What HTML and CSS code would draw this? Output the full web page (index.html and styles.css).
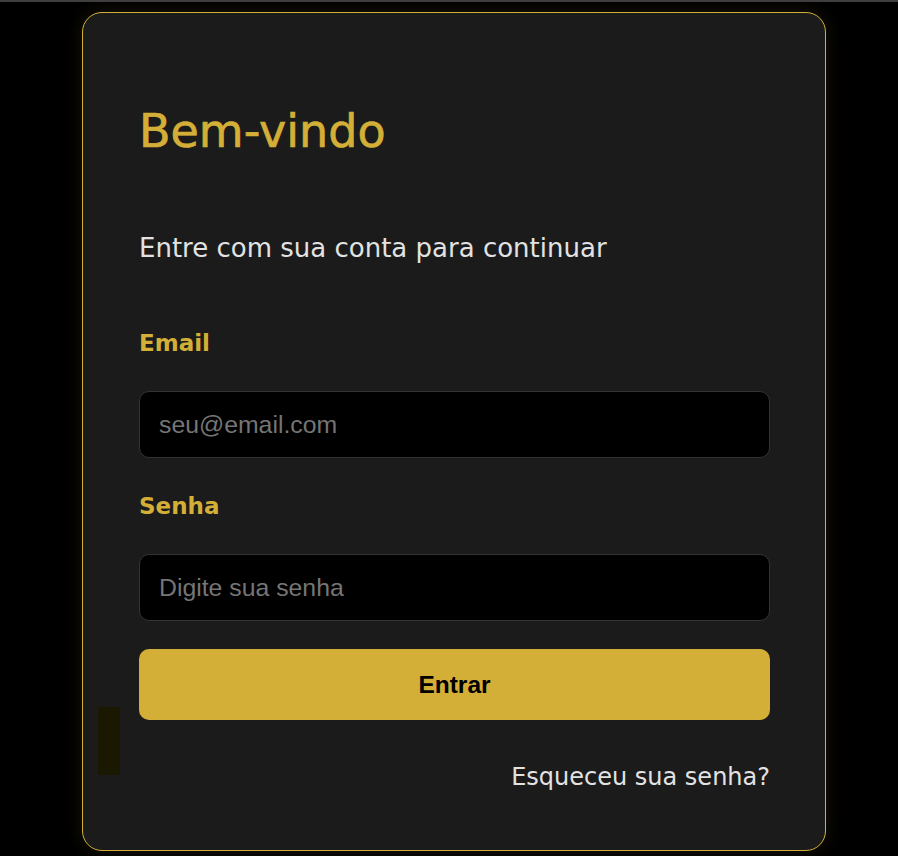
FILE: index.html
```html
<!DOCTYPE html>
<html lang="pt-BR">
<head>
<meta charset="utf-8">
<title>Login</title>
<link rel="stylesheet" href="styles.css">
</head>
<body>
<div class="page">
  <div class="card">
    <h1 class="title">Bem-vindo</h1>
    <p class="subtitle">Entre com sua conta para continuar</p>
    <label class="label" for="email">Email</label>
    <input class="field" id="email" type="email" placeholder="seu@email.com">
    <label class="label label-2" for="senha">Senha</label>
    <input class="field" id="senha" type="password" placeholder="Digite sua senha">
    <button class="btn" type="button">Entrar</button>
    <div class="forgot-row"><a class="forgot" href="#">Esqueceu sua senha?</a></div>
    <div class="marker"></div>
  </div>
</div>
</body>
</html>
```
FILE: styles.css
```css
html, body {
  margin: 0;
  padding: 0;
  background: #000;
}
body {
  border-top: 2px solid #3f3f3f;
  min-height: 854px;
  font-family: "DejaVu Sans", "Open Sans", sans-serif;
}
.page {
  padding: 10px 0 0 82px;
}
.card {
  position: relative;
  box-sizing: border-box;
  width: 744px;
  height: 839px;
  background: #1b1b1b;
  border: 1px solid #d4af37;
  border-radius: 20px;
  box-shadow: 0 0 18px rgba(212, 175, 55, 0.12);
  padding: 88px 56px 0 56px;
  display: flex;
  flex-direction: column;
}
.title {
  margin: 0;
  height: 60px;
  line-height: 60px;
  font-size: 46px;
  font-weight: 500;
  color: #d4af37;
  -webkit-text-stroke: 0.7px #d4af37;
}
.subtitle {
  margin: 72px 0 0;
  line-height: 30px;
  font-size: 26px;
  color: #e2e2e2;
}
.label {
  display: block;
  margin-top: 65px;
  line-height: 30px;
  font-size: 23px;
  font-weight: 700;
  color: #d4af37;
}
.label-2 {
  margin-top: 33px;
}
.field {
  box-sizing: border-box;
  margin-top: 33px;
  width: 631px;
  height: 67px;
  padding: 0 19px;
  background: #000;
  border: 1px solid #333;
  border-radius: 10px;
  font-family: "Liberation Sans", Arial, sans-serif;
  font-size: 24.8px;
  color: #ddd;
  outline: none;
}
.field::placeholder {
  color: #757575;
}
.btn {
  margin-top: 28px;
  width: 631px;
  height: 71px;
  border: none;
  border-radius: 10px;
  background: #d4af37;
  color: #000;
  font-family: "Liberation Sans", Arial, sans-serif;
  font-size: 24.5px;
  font-weight: 700;
}
.forgot-row {
  margin-top: 42px;
  width: 631px;
  display: flex;
  justify-content: flex-end;
  line-height: 30px;
}
.forgot {
  font-size: 24px;
  color: #e2e2e2;
  text-decoration: none;
}
.marker {
  position: absolute;
  left: 15px;
  top: 694px;
  width: 22px;
  height: 68px;
  background: #1a1800;
}
```
